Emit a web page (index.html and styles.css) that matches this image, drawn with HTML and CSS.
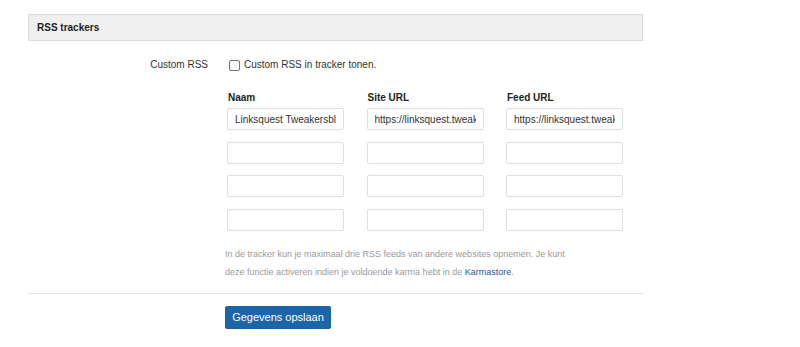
FILE: index.html
```html
<!DOCTYPE html>
<html lang="nl">
<head>
<meta charset="utf-8">
<title>RSS trackers</title>
<link rel="stylesheet" href="styles.css">
</head>
<body>
<div class="panel">
  <div class="panel-head">RSS trackers</div>

  <div class="row row-check">
    <div class="label">Custom RSS</div>
    <label class="check-wrap"><input type="checkbox" class="check"> Custom RSS in tracker tonen.</label>
  </div>

  <div class="row row-feeds">
    <div class="label"></div>
    <div class="feeds">
      <div class="col-head">Naam</div>
      <div class="col-head">Site URL</div>
      <div class="col-head">Feed URL</div>
      <input class="field" type="text" value="Linksquest Tweakersblog">
      <input class="field" type="text" value="https://linksquest.tweakblogs.net">
      <input class="field" type="text" value="https://linksquest.tweakblogs.net/feed">
      <input class="field" type="text">
      <input class="field" type="text">
      <input class="field" type="text">
      <input class="field" type="text">
      <input class="field" type="text">
      <input class="field" type="text">
      <input class="field" type="text">
      <input class="field" type="text">
      <input class="field" type="text">
    </div>
  </div>

  <div class="row row-help">
    <div class="label"></div>
    <p class="help"><span class="help-line">In de tracker kun je maximaal drie RSS feeds van andere websites opnemen. Je kunt</span><span class="help-line">deze functie activeren indien je voldoende karma hebt in de <a href="#" class="link">Karmastore</a>.</span></p>
  </div>

  <div class="divider"></div>

  <div class="row row-submit">
    <div class="label"></div>
    <div><button class="btn" type="button">Gegevens opslaan</button></div>
  </div>
</div>
</body>
</html>
```

FILE: styles.css
```css
html, body {
  margin: 0;
  padding: 0;
  background: #ffffff;
}

body {
  font-family: "Liberation Sans", Arial, sans-serif;
  font-size: 10px;
  color: #333333;
}

.panel {
  width: 615px;
  margin: 14px 0 0 28px;
}

.panel-head {
  height: 27px;
  box-sizing: border-box;
  background: #f0f0f0;
  border: 1px solid #dcdcdc;
  padding: 0 8px;
  display: flex;
  align-items: center;
  font-weight: bold;
  font-size: 10px;
  color: #222222;
}

.row {
  display: grid;
  grid-template-columns: 180px 1fr;
  column-gap: 17px;
}

.label {
  text-align: right;
  line-height: 14px;
}

.row-check {
  margin-top: 17px;
  line-height: 14px;
}

.check-wrap {
  display: flex;
  align-items: center;
  line-height: 14px;
}

.check {
  appearance: none;
  -webkit-appearance: none;
  width: 11px;
  height: 11px;
  box-sizing: border-box;
  margin: 0 4px 0 4px;
  border: 1px solid #767676;
  border-radius: 2px;
  background: #ffffff;
}

.row-feeds {
  margin-top: 19px;
}

.feeds {
  margin-left: 2px;
  display: grid;
  grid-template-columns: repeat(3, 117px);
  column-gap: 22.5px;
  row-gap: 11.5px;
}

.col-head {
  font-weight: bold;
  line-height: 14px;
  padding-left: 1px;
  color: #222222;
  margin-bottom: -8.5px;
}

.field {
  width: 117px;
  height: 22px;
  box-sizing: border-box;
  margin: 0;
  border: 1px solid #dedede;
  border-radius: 2px;
  padding: 0 7px;
  font-family: "Liberation Sans", Arial, sans-serif;
  font-size: 10px;
  color: #333333;
  background: #ffffff;
  outline: none;
}

.row-help {
  margin-top: 14px;
}

.help {
  margin: 0;
  font-size: 9px;
  line-height: 18px;
  color: #9a9a9a;
}

.help-line {
  display: block;
  white-space: nowrap;
}

.link {
  color: #1b5a98;
  text-decoration: none;
}

.divider {
  margin-top: 12px;
  height: 1px;
  background: #e4e4e4;
}

.row-submit {
  margin-top: 12px;
}

.btn {
  height: 23px;
  width: 106px;
  padding: 0;
  border: 1px solid #1a5f9e;
  border-radius: 2px;
  background: #1b65a8;
  color: #ffffff;
  font-family: "Liberation Sans", Arial, sans-serif;
  font-size: 11px;
  cursor: pointer;
}
```
